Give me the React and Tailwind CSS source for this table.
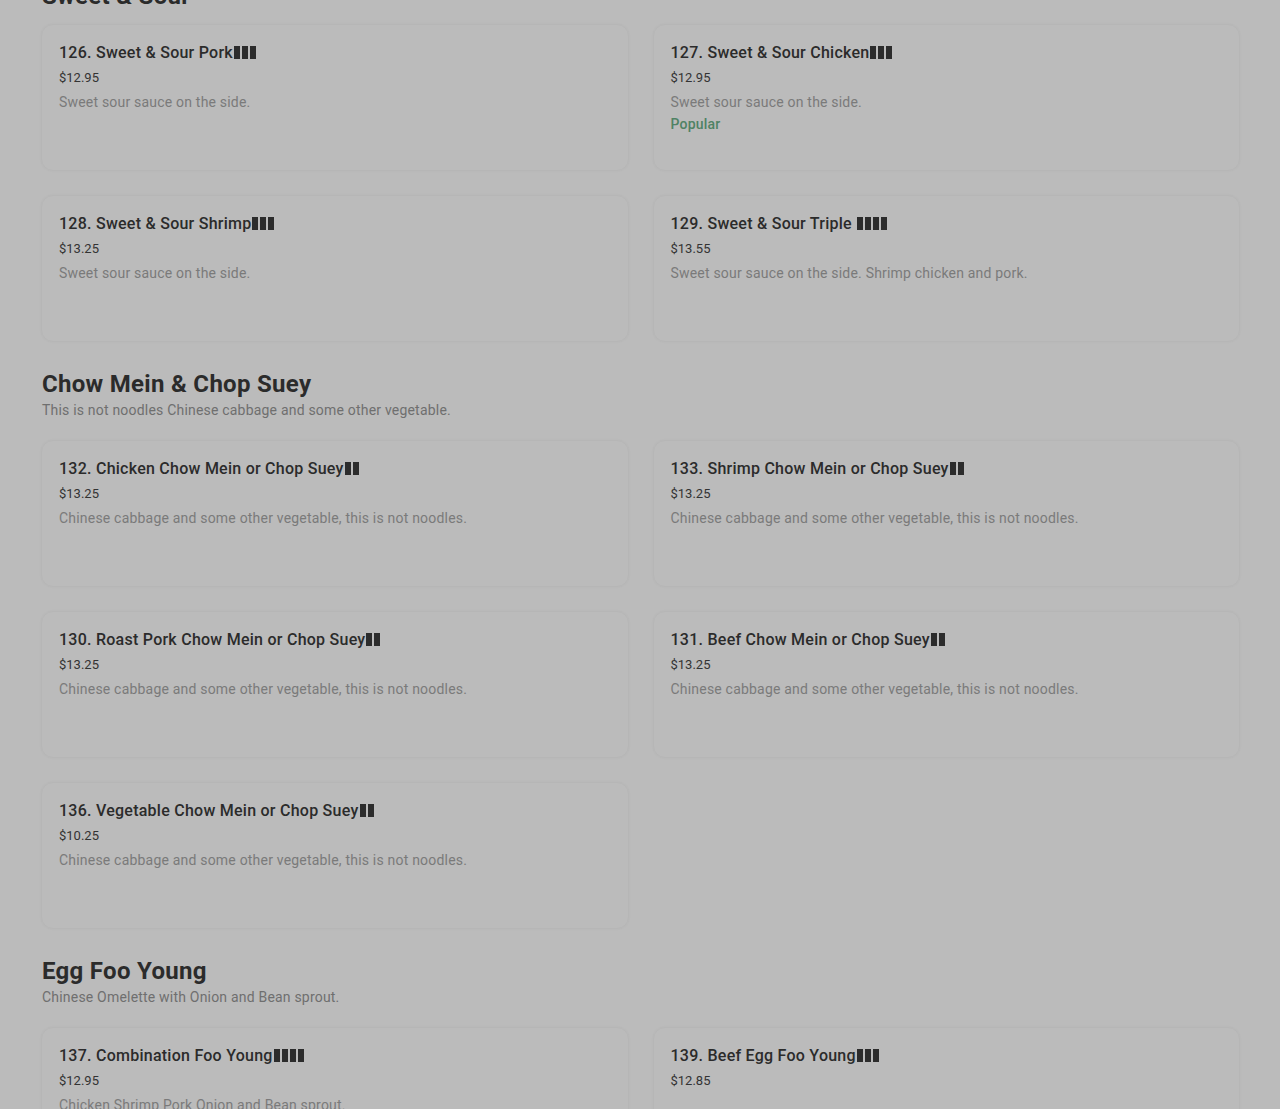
const sections = [
  {
    title: 'Sweet & Sour',
    items: [
      { name: '126. Sweet & Sour Pork', boxes: 3, price: '$12.95', desc: 'Sweet sour sauce on the side.' },
      { name: '127. Sweet & Sour Chicken', boxes: 3, price: '$12.95', desc: 'Sweet sour sauce on the side.', popular: true },
      { name: '128. Sweet & Sour Shrimp', boxes: 3, price: '$13.25', desc: 'Sweet sour sauce on the side.' },
      { name: '129. Sweet & Sour Triple ', boxes: 4, price: '$13.55', desc: 'Sweet sour sauce on the side. Shrimp chicken and pork.' },
    ],
  },
  {
    title: 'Chow Mein & Chop Suey',
    subtitle: 'This is not noodles Chinese cabbage and some other vegetable.',
    items: [
      { name: '132. Chicken Chow Mein or Chop Suey', boxes: 2, price: '$13.25', desc: 'Chinese cabbage and some other vegetable, this is not noodles.' },
      { name: '133. Shrimp Chow Mein or Chop Suey', boxes: 2, price: '$13.25', desc: 'Chinese cabbage and some other vegetable, this is not noodles.' },
      { name: '130. Roast Pork Chow Mein or Chop Suey', boxes: 2, price: '$13.25', desc: 'Chinese cabbage and some other vegetable, this is not noodles.' },
      { name: '131. Beef Chow Mein or Chop Suey', boxes: 2, price: '$13.25', desc: 'Chinese cabbage and some other vegetable, this is not noodles.' },
      { name: '136. Vegetable Chow Mein or Chop Suey', boxes: 2, price: '$10.25', desc: 'Chinese cabbage and some other vegetable, this is not noodles.' },
    ],
  },
  {
    title: 'Egg Foo Young',
    subtitle: 'Chinese Omelette with Onion and Bean sprout.',
    items: [
      { name: '137. Combination Foo Young', boxes: 4, price: '$12.95', desc: 'Chicken Shrimp Pork Onion and Bean sprout.' },
      { name: '139. Beef Egg Foo Young', boxes: 3, price: '$12.85', desc: '' },
    ],
  },
];

// missing-glyph boxes the original shows after each dish name
const Tofu = ({ count }) => (
  <span aria-hidden="true" className="inline-flex gap-[2px] align-[-1px] ml-[1px]">
    {Array.from({ length: count }).map((_, i) => (
      <span key={i} className="inline-block w-[6px] h-[13px] bg-[#2c2c2c]" />
    ))}
  </span>
);

const ItemCard = ({ item }) => (
  <div className="h-[147px] rounded-xl border border-[#b6b6b6] shadow-[0_0_3px_rgba(0,0,0,0.03)] pl-[17px] pr-4 pt-4">
    <div className="text-[16px] leading-6 font-medium tracking-[0.25px] text-[#2b2b2b]">
      {item.name}
      <Tofu count={item.boxes} />
    </div>
    <div className="mt-[3px] text-[13px] leading-5 text-[#333333]">{item.price}</div>
    {item.desc && <div className="mt-1 text-[14px] leading-5 tracking-[0.2px] text-[#7a7a7a]">{item.desc}</div>}
    {item.popular && <div className="mt-[2px] text-[14px] leading-5 font-medium tracking-[0.2px] text-[#4f8264]">Popular</div>}
  </div>
);

export default function App() {
  return (
    <div className="min-h-[1109px] bg-[#bbbbbb] overflow-hidden" style={{ fontFamily: 'Roboto, "Noto Sans", sans-serif' }}>
      <div className="ml-[41px] w-[1199px] mt-[-20px]">
        {sections.map((s, idx) => (
          <section key={s.title} className={idx === 0 ? '' : 'mt-[26px]'}>
            <h2 className="text-[24px] leading-8 font-bold text-[#2b2b2b] tracking-[0.3px] pl-px">{s.title}</h2>
            {s.subtitle && <p className="text-[14px] leading-5 tracking-[0.2px] text-[#6f6f6f] pl-px">{s.subtitle}</p>}
            <div className={`grid grid-cols-2 gap-x-6 gap-y-6 ${s.subtitle ? 'mt-5' : 'mt-3'}`}>
              {s.items.map((item) => (
                <ItemCard key={item.name} item={item} />
              ))}
            </div>
          </section>
        ))}
      </div>
    </div>
  );
}
